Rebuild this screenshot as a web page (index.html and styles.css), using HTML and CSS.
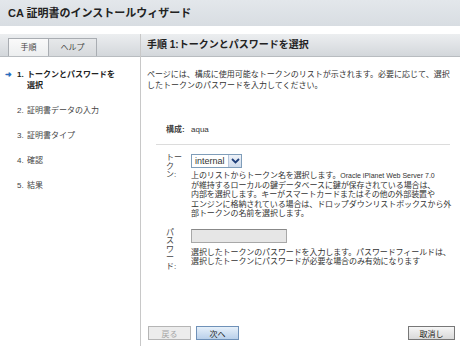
FILE: index.html
```html
<!DOCTYPE html>
<html lang="ja">
<head>
    <meta charset="UTF-8">
    <title>CA 証明書のインストールウィザード</title>
    <link rel="stylesheet" href="styles.css">
</head>
<body>
    <div class="titlebar">
        <h1>CA 証明書のインストールウィザード</h1>
    </div>

    <div class="wizard">
        <div class="side">
            <div class="tabs">
                <span class="tab active">手順</span>
                <span class="tab">ヘルプ</span>
            </div>
            <ol class="steps">
                <li class="current"><span class="mark">&#10140;</span><span class="num">1.</span><span class="label">トークンとパスワードを選択</span></li>
                <li><span class="mark"></span><span class="num">2.</span><span class="label">証明書データの入力</span></li>
                <li><span class="mark"></span><span class="num">3.</span><span class="label">証明書タイプ</span></li>
                <li><span class="mark"></span><span class="num">4.</span><span class="label">確認</span></li>
                <li><span class="mark"></span><span class="num">5.</span><span class="label">結果</span></li>
            </ol>
        </div>

        <div class="main">
            <h2 class="step-title">手順 1:トークンとパスワードを選択</h2>

            <div class="content">
                <p class="intro">ページには、構成に使用可能なトークンのリストが示されます。必要に応じて、選択したトークンのパスワードを入力してください。</p>

                <div class="row config">
                    <div class="field-label">構成:</div>
                    <div class="field-value">aqua</div>
                </div>

                <hr class="sep">

                <div class="row token">
                    <div class="field-label">トー<br>ク<br>ン:</div>
                    <div class="field-value">
                        <span class="select">
                            <span class="select-val">internal</span>
                            <span class="select-btn">
                                <svg width="9" height="6" viewBox="0 0 9 6"><path d="M1 1 L4.5 4.5 L8 1" fill="none" stroke="#1f3f7a" stroke-width="1.8"/></svg>
                            </span>
                        </span>
                        <p class="help">上のリストからトークン名を選択します。<span class="latin">Oracle iPlanet Web Server 7.0</span><br>が維持するローカルの鍵データベースに鍵が保存されている場合は、<br>内部を選択します。キーがスマートカードまたはその他の外部装置や<br>エンジンに格納されている場合は、ドロップダウンリストボックスから外<br>部トークンの名前を選択します。</p>
                    </div>
                </div>

                <div class="row password">
                    <div class="field-label">パ<br>ス<br>ワ<br>ー<br>ド:</div>
                    <div class="field-value">
                        <span class="input"></span>
                        <p class="help">選択したトークンのパスワードを入力します。パスワードフィールドは、<br>選択したトークンにパスワードが必要な場合のみ有効になります</p>
                    </div>
                </div>
            </div>

            <div class="buttons">
                <button class="btn disabled">戻る</button>
                <button class="btn primary">次へ</button>
                <span class="spacer"></span>
                <button class="btn cancel">取消し</button>
            </div>
        </div>
    </div>
</body>
</html>
```

FILE: styles.css
```css
body {
    margin: 0;
    font-family: "Liberation Sans", "Noto Sans CJK JP", sans-serif;
    font-size: 8px;
    color: #333;
    background: #fff;
}
.titlebar {
    height: 26px;
    background: linear-gradient(#e3e7eb, #d8dde2);
    padding-left: 8px;
}
.titlebar h1 {
    margin: 0;
    font-size: 11px;
    line-height: 26px;
    color: #222;
}
.wizard {
    display: flex;
    height: 312px;
    margin-top: 8px;
}
.side {
    width: 140px;
    border-right: 1px solid #c8c8c8;
}
.tabs {
    height: 22px;
    display: flex;
    align-items: flex-end;
    padding-left: 8px;
    background: linear-gradient(#eceef0, #d3d7db);
    border-bottom: 1px solid #b8bcc0;
}
.tab {
    width: 39px;
    height: 17px;
    line-height: 17px;
    text-align: center;
    background: linear-gradient(#e6e8ea, #d6d9dc);
    border: 1px solid #a9adb2;
    border-bottom: none;
    color: #444;
}
.tab + .tab {
    width: 47px;
    border-left: none;
}
.tab.active {
    background: linear-gradient(#fafafa, #eceeef);
}
.steps {
    list-style: none;
    margin: 12px 0 0;
    padding: 0 6px 0 5px;
}
.steps li {
    display: flex;
    line-height: 11px;
    margin-bottom: 14px;
    color: #444;
}
.steps .mark {
    width: 12px;
    flex: none;
    color: #2a6ebd;
    font-size: 8px;
}
.steps .num {
    width: 10px;
    flex: none;
}
.steps .label {
    width: 92px;
}
.steps .current {
    font-weight: bold;
    color: #222;
}
.main {
    flex: 1;
    display: flex;
    flex-direction: column;
}
.step-title {
    margin: 0;
    height: 22px;
    line-height: 22px;
    padding-left: 6px;
    font-size: 10px;
    color: #222;
    background: linear-gradient(#eceef0, #d3d7db);
    border-bottom: 1px solid #b8bcc0;
}
.content {
    flex: 1;
    padding: 12px 8px 0 6px;
}
.intro {
    margin: 0 0 33px;
    line-height: 11px;
}
.row {
    display: flex;
    padding-left: 19px;
}
.field-label {
    width: 25px;
    flex: none;
    line-height: 8.5px;
    color: #444;
}
.config .field-label {
    font-weight: bold;
    line-height: 11px;
}
.config .field-value {
    line-height: 11px;
}
.sep {
    border: none;
    border-top: 1px solid #dcdcdc;
    margin: 9px 2px 9px 9px;
}
.select {
    display: flex;
    width: max-content;
    height: 14px;
    box-sizing: border-box;
    border: 1px solid #7f9db9;
    background: #fff;
}
.select-val {
    padding: 0 3px;
    font-size: 9px;
    line-height: 12px;
    width: 30px;
}
.select-btn {
    width: 12px;
    display: flex;
    align-items: center;
    justify-content: center;
    background: linear-gradient(#eef2f8, #cfdbec);
    border-left: 1px solid #b6c6dc;
}
.help {
    margin: 3px 0 0;
    line-height: 9.5px;
    white-space: nowrap;
    letter-spacing: -0.1px;
}
.help .latin {
    font-size: 7px;
    letter-spacing: 0;
}
.password {
    margin-top: 10px;
}
.input {
    display: block;
    width: 94px;
    height: 12px;
    background: #e6e6e6;
    border: 1px solid #a8a8a8;
    border-top-color: #888;
}
.password .help {
    margin-top: 5px;
}
.buttons {
    display: flex;
    padding: 0 5px 6px 7px;
    gap: 5px;
}
.spacer {
    flex: 1;
}
.btn {
    font-family: inherit;
    font-size: 8px;
    width: 43px;
    height: 14px;
    padding: 0;
    border: 1px solid #777;
    background: linear-gradient(#f6f6f6, #d9d9d9);
    color: #222;
}
.btn.cancel {
    width: 47px;
}
.btn.disabled {
    border-color: #b5b5b5;
    background: #ececec;
    color: #a5a5a5;
}
.btn.primary {
    border-color: #6f91b8;
    background: linear-gradient(#e6f0fa, #b9d0ea);
}
```
